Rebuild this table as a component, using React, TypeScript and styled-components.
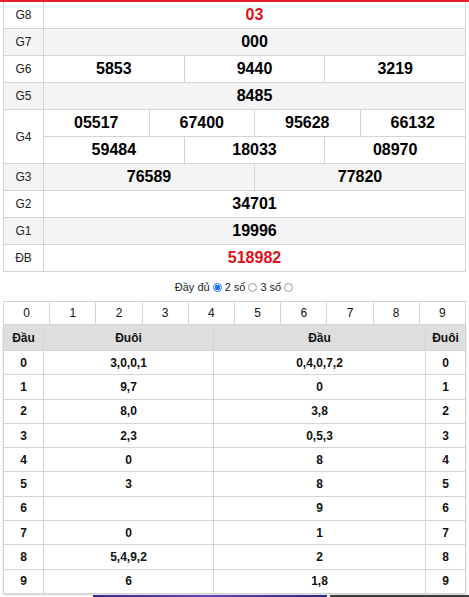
import React from "react";
import styled, { createGlobalStyle } from "styled-components";

const Global = createGlobalStyle`
  html, body { margin: 0; padding: 0; background: #fff; }
  body { font-family: "Liberation Sans", Arial, sans-serif; color: #000; }
  * { box-sizing: border-box; }
`;

const Page = styled.div`
  width: 469px;
  border-top: 2px solid #e8202a;
`;

const Wrap = styled.div`
  padding: 0 3px;
  width: 469px;
`;

const Prizes = styled.div`
  width: 463px;
  border-left: 1px solid #d4d4d4;
`;

const PrizeRow = styled.div<{ $alt?: boolean }>`
  display: flex;
  background: ${(p) => (p.$alt ? "#f4f4f4" : "#fff")};
`;

const Label = styled.div`
  width: 40px;
  flex: none;
  display: flex;
  align-items: center;
  justify-content: center;
  font-size: 12px;
  color: #222;
  border-right: 1px solid #d4d4d4;
  border-bottom: 1px solid #d4d4d4;
`;

const Values = styled.div`
  flex: 1;
  display: flex;
  flex-direction: column;
`;

const Line = styled.div`
  display: flex;
`;

const Num = styled.div<{ $red?: boolean }>`
  flex: 1 1 0;
  height: 27px;
  display: flex;
  align-items: center;
  justify-content: center;
  font-size: 16px;
  font-weight: bold;
  color: ${(p) => (p.$red ? "#e0101a" : "#000")};
  border-right: 1px solid #d4d4d4;
  border-bottom: 1px solid #d4d4d4;
`;

const Options = styled.div`
  height: 29px;
  display: flex;
  align-items: center;
  justify-content: center;
  font-size: 11px;
  color: #222;
  gap: 2px;
  padding-top: 1px;
`;

const Radio = styled.span<{ $on?: boolean }>`
  display: inline-block;
  width: 9px;
  height: 9px;
  border-radius: 50%;
  margin: 0 1px;
  border: 1px solid ${(p) => (p.$on ? "#1a73e8" : "#9a9a9a")};
  background: ${(p) =>
    p.$on ? "radial-gradient(circle, #1a73e8 0 2.5px, #fff 3px)" : "#fff"};
`;

const Digits = styled.div`
  width: 463px;
  display: grid;
  grid-template-columns: repeat(10, 1fr);
  border-left: 1px solid #d4d4d4;
  border-top: 1px solid #d4d4d4;
`;

const Digit = styled.div`
  height: 23px;
  display: flex;
  align-items: center;
  justify-content: center;
  font-size: 12px;
  color: #111;
  border-right: 1px solid #d4d4d4;
  border-bottom: 1px solid #d4d4d4;
`;

const Loto = styled.div`
  width: 463px;
  display: grid;
  grid-template-columns: 40px 170px 212px 40px;
  border-left: 1px solid #d4d4d4;
  box-shadow: 0 1px 2px rgba(0, 0, 0, 0.18);
`;

const LCell = styled.div<{ $head?: boolean }>`
  height: ${(p) => (p.$head ? "26px" : "24.3px")};
  display: flex;
  align-items: center;
  justify-content: center;
  font-size: 12px;
  font-weight: bold;
  color: #111;
  background: ${(p) => (p.$head ? "#dedede" : "#fff")};
  border-right: 1px solid #d4d4d4;
  border-bottom: 1px solid #d4d4d4;
`;

const Banner = styled.div`
  display: flex;
  height: 30px;
  margin-top: 1px;
`;

const BannerImg = styled.div<{ $w: number; $bg: string; $ml: number }>`
  width: ${(p) => p.$w}px;
  margin-left: ${(p) => p.$ml}px;
  background: ${(p) => p.$bg};
`;

const prizes: { label: string; lines: string[][]; red?: boolean }[] = [
  { label: "G8", lines: [["03"]], red: true },
  { label: "G7", lines: [["000"]] },
  { label: "G6", lines: [["5853", "9440", "3219"]] },
  { label: "G5", lines: [["8485"]] },
  { label: "G4", lines: [["05517", "67400", "95628", "66132"], ["59484", "18033", "08970"]] },
  { label: "G3", lines: [["76589", "77820"]] },
  { label: "G2", lines: [["34701"]] },
  { label: "G1", lines: [["19996"]] },
  { label: "ĐB", lines: [["518982"]], red: true },
];

const loto: [string, string, string, string][] = [
  ["0", "3,0,0,1", "0,4,0,7,2", "0"],
  ["1", "9,7", "0", "1"],
  ["2", "8,0", "3,8", "2"],
  ["3", "2,3", "0,5,3", "3"],
  ["4", "0", "8", "4"],
  ["5", "3", "8", "5"],
  ["6", "", "9", "6"],
  ["7", "0", "1", "7"],
  ["8", "5,4,9,2", "2", "8"],
  ["9", "6", "1,8", "9"],
];

export default function App() {
  return (
    <Page>
      <Global />
      <Wrap>
        <Prizes>
          {prizes.map((p, i) => (
            <PrizeRow key={p.label} $alt={i % 2 === 1}>
              <Label>{p.label}</Label>
              <Values>
                {p.lines.map((line, j) => (
                  <Line key={j}>
                    {line.map((n) => (
                      <Num key={n} $red={p.red}>
                        {n}
                      </Num>
                    ))}
                  </Line>
                ))}
              </Values>
            </PrizeRow>
          ))}
        </Prizes>
        <Options>
          Đầy đủ <Radio $on /> 2 số <Radio /> 3 số <Radio />
        </Options>
        <Digits>
          {Array.from({ length: 10 }, (_, i) => (
            <Digit key={i}>{i}</Digit>
          ))}
        </Digits>
        <Loto>
          <LCell $head>Đầu</LCell>
          <LCell $head>Đuôi</LCell>
          <LCell $head>Đầu</LCell>
          <LCell $head>Đuôi</LCell>
          {loto.map((r) =>
            r.map((c, k) => <LCell key={r[0] + "-" + k}>{c}</LCell>)
          )}
        </Loto>
      </Wrap>
      <Banner>
        <BannerImg $ml={93} $w={234} $bg="linear-gradient(90deg,#3a2a8c,#6a3fc0,#2a2a7a)" />
        <BannerImg $ml={3} $w={139} $bg="#3c3c3c" />
      </Banner>
    </Page>
  );
}
